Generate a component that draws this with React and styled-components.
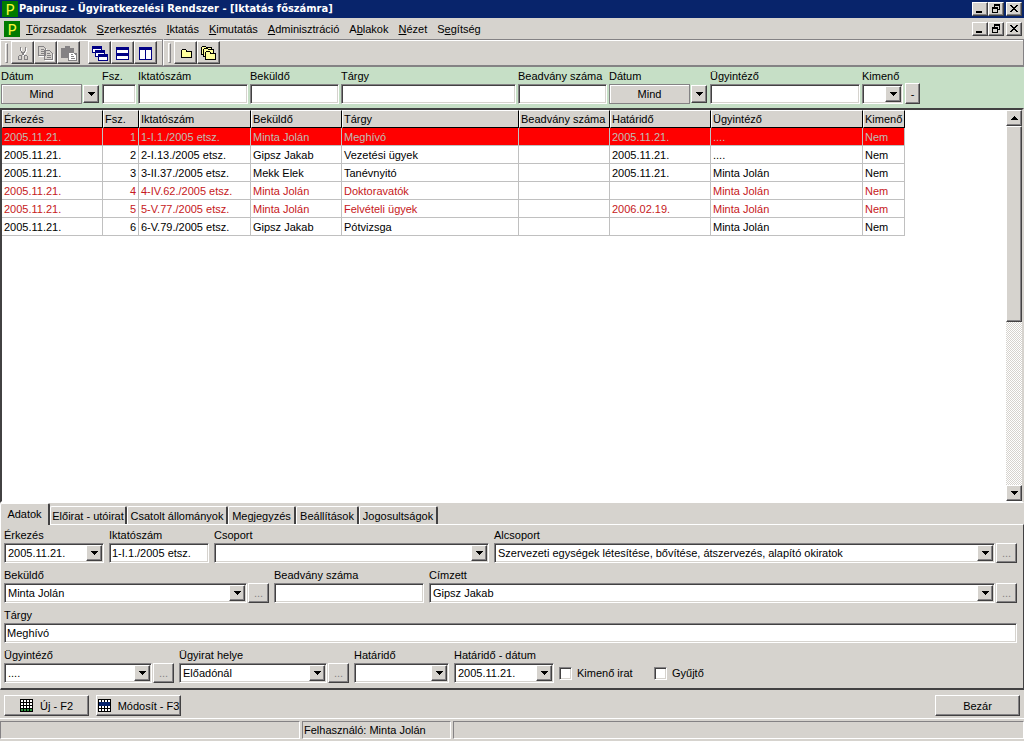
import React, { useState } from 'react';
import styled, { createGlobalStyle, css, ThemeProvider } from 'styled-components';

const theme = {
  face: '#d6d3ce',
  light: '#ffffff',
  shadow: '#848284',
  dark: '#424142',
  title: '#08246b',
  filter: '#c6dfc6',
  line: '#c0c0c0',
};

const menus = [
  ['', 'T', 'örzsadatok'],
  ['', 'S', 'zerkesztés'],
  ['', 'I', 'ktatás'],
  ['', 'K', 'imutatás'],
  ['', 'A', 'dminisztráció'],
  ['A', 'b', 'lakok'],
  ['', 'N', 'ézet'],
  ['S', 'e', 'gítség'],
];

const columns = [
  { title: 'Érkezés', width: 101 },
  { title: 'Fsz.', width: 36 },
  { title: 'Iktatószám', width: 112 },
  { title: 'Beküldő', width: 91 },
  { title: 'Tárgy', width: 177 },
  { title: 'Beadvány száma', width: 91 },
  { title: 'Határidő', width: 101 },
  { title: 'Ügyintéző', width: 152 },
  { title: 'Kimenő', width: 42 },
];

const rows = [
  { state: 'selected', cells: ['2005.11.21.', '1', '1-I.1./2005 etsz.', 'Minta Jolán', 'Meghívó', '', '2005.11.21.', '....', 'Nem'] },
  { state: '', cells: ['2005.11.21.', '2', '2-I.13./2005 etsz.', 'Gipsz Jakab', 'Vezetési ügyek', '', '2005.11.21.', '....', 'Nem'] },
  { state: '', cells: ['2005.11.21.', '3', '3-II.37./2005 etsz.', 'Mekk Elek', 'Tanévnyitó', '', '2005.11.21.', 'Minta Jolán', 'Nem'] },
  { state: 'late', cells: ['2005.11.21.', '4', '4-IV.62./2005 etsz.', 'Minta Jolán', 'Doktoravatók', '', '', 'Minta Jolán', 'Nem'] },
  { state: 'late', cells: ['2005.11.21.', '5', '5-V.77./2005 etsz.', 'Minta Jolán', 'Felvételi ügyek', '', '2006.02.19.', 'Minta Jolán', 'Nem'] },
  { state: '', cells: ['2005.11.21.', '6', '6-V.79./2005 etsz.', 'Gipsz Jakab', 'Pótvizsga', '', '', 'Minta Jolán', 'Nem'] },
];

const tabs = [
  { title: 'Adatok', width: 50 },
  { title: 'Előirat - utóirat', width: 77 },
  { title: 'Csatolt állományok', width: 101 },
  { title: 'Megjegyzés', width: 68 },
  { title: 'Beállítások', width: 63 },
  { title: 'Jogosultságok', width: 79 },
];

const App = () => {
  const [activeTab, setActiveTab] = useState('Adatok');

  return (
    <ThemeProvider theme={theme}>
      <GlobalStyle />
      <Window>
        <TitleBar>
          <Logo aria-hidden="true">P</Logo>
          <Title>Papirusz - Ügyiratkezelési Rendszer - [Iktatás főszámra]</Title>
          <WindowButtons />
        </TitleBar>

        <MenuBar>
          <Logo aria-hidden="true">P</Logo>
          <Menus>
            {menus.map(([before, key, after]) => (
              <MenuItem key={key + after} type="button">
                {before}
                <u>{key}</u>
                {after}
              </MenuItem>
            ))}
          </Menus>
          <WindowButtons />
        </MenuBar>

        <ToolBars>
          <ToolBar>
            <Grip />
            <ToolGroup>
              <ToolButton type="button" aria-label="Kivágás" disabled><CutIcon /></ToolButton>
              <ToolButton type="button" aria-label="Másolás" disabled><CopyIcon /></ToolButton>
              <ToolButton type="button" aria-label="Beillesztés" disabled><PasteIcon /></ToolButton>
            </ToolGroup>
            <ToolGroup>
              <ToolButton type="button" aria-label="Lépcsőzetes"><CascadeIcon /></ToolButton>
              <ToolButton type="button" aria-label="Vízszintes"><RowsIcon /></ToolButton>
              <ToolButton type="button" aria-label="Függőleges"><ColumnsIcon /></ToolButton>
            </ToolGroup>
          </ToolBar>
          <ToolBar $fill>
            <Grip />
            <ToolGroup>
              <ToolButton type="button" aria-label="Irat"><FolderIcon /></ToolButton>
              <ToolButton type="button" aria-label="Iratok"><FoldersIcon /></ToolButton>
            </ToolGroup>
          </ToolBar>
        </ToolBars>

        <FilterBar>
          <Field id="f-date" label="Dátum"><Combo id="f-date" value="Mind" flat /></Field>
          <Field id="f-no" label="Fsz."><TextBox id="f-no" /></Field>
          <Field id="f-reg" label="Iktatószám"><TextBox id="f-reg" /></Field>
          <Field id="f-sender" label="Beküldő"><TextBox id="f-sender" /></Field>
          <Field id="f-subject" label="Tárgy"><TextBox id="f-subject" /></Field>
          <Field id="f-sub" label="Beadvány száma"><TextBox id="f-sub" /></Field>
          <Field id="f-due" label="Dátum"><Combo id="f-due" value="Mind" flat /></Field>
          <Field id="f-clerk" label="Ügyintéző"><TextBox id="f-clerk" /></Field>
          <Field id="f-out" label="Kimenő"><Combo id="f-out" value="" /></Field>
          <ClearButton type="button">-</ClearButton>
        </FilterBar>

        <GridArea>
          <GridScroll>
            <Table>
              <colgroup>
                {columns.map(({ title, width }) => (
                  <Col key={title} $width={width} />
                ))}
              </colgroup>
              <thead>
                <tr>
                  {columns.map(({ title }) => (
                    <Th key={title}>{title}</Th>
                  ))}
                </tr>
              </thead>
              <tbody>
                {rows.map(({ state, cells }) => (
                  <Row key={cells[1]} $state={state}>
                    {cells.map((cell, i) => (
                      <Td key={columns[i].title} $right={i === 1}>{cell}</Td>
                    ))}
                  </Row>
                ))}
              </tbody>
            </Table>
          </GridScroll>
          <ScrollBar>
            <ScrollButton type="button" aria-label="Fel"><Arrow up /></ScrollButton>
            <Thumb />
            <Track />
            <ScrollButton type="button" aria-label="Le"><Arrow /></ScrollButton>
          </ScrollBar>
        </GridArea>

        <Tabs role="tablist">
          {tabs.map(({ title, width }) => (
            <Tab
              key={title}
              type="button"
              role="tab"
              aria-selected={activeTab === title}
              $active={activeTab === title}
              $width={width}
              onClick={() => setActiveTab(title)}
            >
              {title}
            </Tab>
          ))}
        </Tabs>

        <TabPage>
          <FormRow>
            <Field id="arrived" label="Érkezés" width={100}><Combo id="arrived" value="2005.11.21." /></Field>
            <Field id="regno" label="Iktatószám" width={100}><TextBox id="regno" defaultValue="1-I.1./2005 etsz." /></Field>
            <Field id="group" label="Csoport" width={275}><Combo id="group" value="" /></Field>
            <Field id="subgroup" label="Alcsoport">
              <Combo id="subgroup" value="Szervezeti egységek létesítése, bővítése, átszervezés, alapító okiratok" />
              <MoreButton type="button" disabled>...</MoreButton>
            </Field>
          </FormRow>
          <FormRow>
            <Field id="sender" label="Beküldő" width={265}>
              <Combo id="sender" value="Minta Jolán" />
              <MoreButton type="button" disabled>...</MoreButton>
            </Field>
            <Field id="subno" label="Beadvány száma" width={150}><TextBox id="subno" /></Field>
            <Field id="addressee" label="Címzett">
              <Combo id="addressee" value="Gipsz Jakab" />
              <MoreButton type="button" disabled>...</MoreButton>
            </Field>
          </FormRow>
          <FormRow>
            <Field id="subject" label="Tárgy"><TextBox id="subject" defaultValue="Meghívó" /></Field>
          </FormRow>
          <FormRow>
            <Field id="clerk" label="Ügyintéző" width={170}>
              <Combo id="clerk" value="...." />
              <MoreButton type="button" disabled>...</MoreButton>
            </Field>
            <Field id="place" label="Ügyirat helye" width={170}>
              <Combo id="place" value="Előadónál" />
              <MoreButton type="button" disabled>...</MoreButton>
            </Field>
            <Field id="due" label="Határidő" width={95}><Combo id="due" value="" /></Field>
            <Field id="duedate" label="Határidő - dátum" width={100}><Combo id="duedate" value="2005.11.21." /></Field>
            <CheckLabel><Check type="checkbox" />Kimenő irat</CheckLabel>
            <CheckLabel><Check type="checkbox" />Gyűjtő</CheckLabel>
          </FormRow>
        </TabPage>

        <Actions>
          <ActionButton type="button"><TableIcon color="#2f9440" /><span>Új - F2</span></ActionButton>
          <ActionButton type="button"><TableIcon color="#08246b" top /><span>Módosít - F3</span></ActionButton>
          <Spacer />
          <ActionButton type="button">Bezár</ActionButton>
        </Actions>

        <StatusBar>
          <StatusPane $width={300} />
          <StatusPane $width={149}>Felhasználó: Minta Jolán</StatusPane>
          <StatusPane />
        </StatusBar>
      </Window>
    </ThemeProvider>
  );
};

const WindowButtons = () => (
  <Controls>
    <ControlButton type="button" aria-label="Kis méret">
      <Icon width="10" height="10"><path d="M1 7h6v2H1z" /></Icon>
    </ControlButton>
    <ControlButton type="button" aria-label="Előző méret">
      <Icon width="10" height="10">
        <path d="M3 0h6v6H7V5h1V2H4v1H3zM1 3h6v6H1zM2 5v3h4V5z" fillRule="evenodd" />
      </Icon>
    </ControlButton>
    <ControlButton type="button" aria-label="Bezárás" $gap>
      <Icon width="10" height="10">
        <path d="M1 1h2v1h1v1h2V2h1V1h2v1H8v1H7v1H6v1h1v1h1v1h1v1H7V7H6V6H4v1H3v1H1V7h1V6h1V5h1V4H3V3H2V2H1z" />
      </Icon>
    </ControlButton>
  </Controls>
);

const Field = ({ id, label, width, children }) => (
  <FieldBox $width={width}>
    <Label htmlFor={id}>{label}</Label>
    <FieldControls>{children}</FieldControls>
  </FieldBox>
);

const Combo = ({ id, value, flat }) => (
  <ComboBox $flat={flat}>
    <Select id={id} defaultValue={value} $flat={flat}>
      <option>{value}</option>
    </Select>
    <DropArrow><Arrow /></DropArrow>
  </ComboBox>
);

const Arrow = ({ up }) => (
  <Icon width="7" height="4">
    <path d={up ? 'M3 0h1v1h1v1h1v1h1v1H0V3h1V2h1V1h1z' : 'M0 0h7v1H6v1H5v1H4v1H3V3H2V2H1V1H0z'} />
  </Icon>
);

const CutIcon = () => (
  <Icon width="16" height="16" fill="none" strokeWidth="1">
    <path d="M6.500 2.500v4l4 5M11.500 2.500v4l-4 5" stroke="#fff" />
    <path d="M5.500 1.500v4l4 5M10.500 1.500v4l-4 5M4.500 10.500h2v4h-3v-3zM9.500 10.500h2l1 1v3h-3z" stroke="#848284" />
  </Icon>
);

const CopyIcon = () => (
  <Icon width="16" height="16" fill="#d6d3ce">
    <path d="M1.500 2.500h5l2 2v7h-7zM7.500 6.500h5l3 3v6h-8z" stroke="#fff" />
    <path d="M.5 1.500h5l2 2v7h-7zM6.500 5.500h5l3 3v6h-8z" stroke="#848284" />
    <path d="M2.500 4.500h3M2.500 6.500h4M2.500 8.500h4M8.500 8.500h3M8.500 10.500h4M8.500 12.500h4" stroke="#848284" />
  </Icon>
);

const PasteIcon = () => (
  <Icon width="16" height="16">
    <path d="M0 3h4V1h5v2h4v5h3v7H7v-2H0z" fill="#848284" />
    <path d="M8 8h4l3 3v4H8z" fill="#fff" />
    <path d="M9.500 9.500h2M9.500 11.500h3M9.500 13.500h4" stroke="#848284" />
    <path d="M15.500 9v7M7 15.500h9" stroke="#848284" />
  </Icon>
);

const CascadeIcon = () => (
  <Icon width="16" height="16">
    <path d="M0 1h10v7H0z" fill="#000084" />
    <path d="M1 4h8v3H1z" fill="#fff" />
    <path d="M3 5h10v7H3z" fill="#000084" />
    <path d="M4 8h8v3H4z" fill="#fff" />
    <path d="M6 9h10v7H6z" fill="#000084" />
    <path d="M7 12h8v3H7z" fill="#fff" />
  </Icon>
);

const RowsIcon = () => (
  <Icon width="16" height="16">
    <path d="M1 2h13v13H1z" fill="#000084" />
    <path d="M2 5h11v3H2zM2 11h11v3H2z" fill="#fff" />
  </Icon>
);

const ColumnsIcon = () => (
  <Icon width="16" height="16">
    <path d="M1 2h13v13H1z" fill="#000084" />
    <path d="M2 5h5v9H2zM8 5h5v9H8z" fill="#fff" />
  </Icon>
);

const FolderIcon = () => (
  <Icon width="16" height="16">
    <path d="M3.500 12.500v-7l1-1h3l1 1v1h5v6z" fill="#ffff9c" stroke="#000" />
  </Icon>
);

const FoldersIcon = () => (
  <Icon width="16" height="16" fill="#ffff9c" stroke="#000">
    <path d="M.5 9.500v-7l1-1h3l1 1h5v7z" />
    <path d="M2.500 11.500v-7l1-1h3l1 1h5v7z" />
    <path d="M4.500 14.500v-7l1-1h3l1 1v1h5v6z" />
  </Icon>
);

const TableIcon = ({ color, top }) => (
  <Icon width="13" height="13">
    <path d="M0 0h13v13H0z" fill="#000" />
    <path d="M1 1h2v2H1zM4 1h2v2H4zM7 1h2v2H7zM10 1h2v2h-2zM1 4h2v2H1zM4 4h2v2H4zM7 4h2v2H7zM10 4h2v2h-2zM1 7h2v2H1zM4 7h2v2H4zM7 7h2v2H7zM10 7h2v2h-2zM1 10h2v2H1zM4 10h2v2H4zM7 10h2v2H7zM10 10h2v2h-2z" fill="#fff" />
    <path d={top ? 'M1 3h11v4H1z' : 'M1 10h2v2H1zM4 10h2v2H4zM7 10h2v2H7zM10 10h2v2h-2z'} fill={color} />
  </Icon>
);

const raised = css`
  background: ${({ theme }) => theme.face};
  border: 1px solid;
  border-color: ${({ theme }) => `${theme.light} ${theme.dark} ${theme.dark} ${theme.light}`};
  box-shadow: inset -1px -1px 0 ${({ theme }) => theme.shadow};
`;

const sunken = css`
  background: #fff;
  border: 1px solid;
  border-color: ${({ theme }) => `${theme.shadow} ${theme.light} ${theme.light} ${theme.shadow}`};
  box-shadow:
    inset 1px 1px 0 ${({ theme }) => theme.dark},
    inset -1px -1px 0 ${({ theme }) => theme.face};
`;

const GlobalStyle = createGlobalStyle`
  * {
    box-sizing: border-box;
  }

  body {
    margin: 0;
  }

  body, button, input, select {
    font-family: 'Liberation Sans', Arial, sans-serif;
    font-size: 11px;
    line-height: 14px;
    color: #000;
  }

  button {
    padding: 0;
  }
`;

const Icon = styled.svg.attrs({ shapeRendering: 'crispEdges', 'aria-hidden': true })`
  display: block;
  flex: none;
`;

const Window = styled.div`
  display: flex;
  flex-direction: column;
  min-height: 100vh;
  background: ${({ theme }) => theme.face};
`;

const TitleBar = styled.header`
  display: flex;
  align-items: center;
  height: 18px;
  padding: 0 2px;
  background: ${({ theme }) => theme.title};
`;

const Logo = styled.span`
  flex: none;
  width: 16px;
  height: 16px;
  background: #007a00;
  color: #f7f739;
  font-family: Lato, sans-serif;
  font-size: 15px;
  line-height: 16px;
  text-align: center;
`;

const Title = styled.h1`
  flex: 1;
  margin: 0 0 0 1px;
  color: #fff;
  font-family: 'DejaVu Sans Condensed', 'DejaVu Sans', sans-serif;
  font-size: 11px;
  font-weight: bold;
  white-space: nowrap;
`;

const Controls = styled.div`
  display: flex;
`;

const ControlButton = styled.button`
  ${raised}
  display: flex;
  align-items: center;
  justify-content: center;
  width: 16px;
  height: 14px;
  margin-left: ${({ $gap }) => ($gap ? '2px' : '0')};
`;

const MenuBar = styled.nav`
  display: flex;
  align-items: center;
  height: 21px;
  padding: 0 2px 0 4px;
`;

const Menus = styled.div`
  display: flex;
  flex: 1;
  gap: 10px;
  padding-left: 6px;
`;

const MenuItem = styled.button`
  border: 0;
  background: none;
`;

const ToolBars = styled.div`
  display: flex;
  height: 28px;
  border-bottom: 1px solid ${({ theme }) => theme.shadow};
`;

const ToolBar = styled.div`
  display: flex;
  align-items: center;
  gap: 3px;
  flex: ${({ $fill }) => ($fill ? '1' : 'none')};
  padding: 0 5px 0 4px;
  border: 1px solid;
  border-color: ${({ theme }) => `${theme.shadow} ${theme.shadow} ${theme.shadow} ${theme.light}`};
  box-shadow: inset 0 1px 0 ${({ theme }) => theme.light};
`;

const Grip = styled.span`
  width: 3px;
  height: 20px;
  border: 1px solid;
  border-color: ${({ theme }) => `${theme.light} ${theme.shadow} ${theme.shadow} ${theme.light}`};
`;

const ToolGroup = styled.div`
  display: flex;

  & + & {
    margin-left: 5px;
  }
`;

const ToolButton = styled.button`
  ${raised}
  display: flex;
  align-items: center;
  justify-content: center;
  width: 23px;
  height: 23px;
`;

const FilterBar = styled.form`
  display: grid;
  grid-template-columns: 99px 34px 110px 89px 175px 89px 99px 150px 41px 15px;
  column-gap: 2px;
  align-items: end;
  padding: 1px 1px 4px;
  background: ${({ theme }) => theme.filter};
`;

const FieldBox = styled.div`
  display: flex;
  flex-direction: column;
  flex: ${({ $width }) => ($width ? `0 0 ${$width}px` : '1')};
  min-width: 0;
`;

const Label = styled.label`
  line-height: 16px;
  white-space: nowrap;
`;

const FieldControls = styled.div`
  display: flex;
  gap: 1px;
`;

const TextBox = styled.input.attrs({ type: 'text' })`
  ${sunken}
  flex: 1;
  min-width: 0;
  height: 20px;
  padding: 0 2px;
  outline: 0;
`;

const ComboBox = styled.div`
  position: relative;
  display: flex;
  flex: 1;
  min-width: 0;
  height: 20px;
  ${({ $flat }) => !$flat && sunken}
`;

const Select = styled.select`
  appearance: none;
  flex: 1;
  min-width: 0;
  padding: 0 18px 0 3px;
  border: 0;
  background: transparent;
  outline: 0;

  ${({ $flat, theme }) =>
    $flat &&
    css`
      margin-right: 18px;
      padding: 0;
      border: 1px solid ${theme.shadow};
      border-radius: 0;
      background: ${theme.face};
      box-shadow: inset 1px 1px 0 ${theme.light};
      text-align: center;
      text-align-last: center;
    `}
`;

const DropArrow = styled.span`
  ${raised}
  position: absolute;
  top: 1px;
  right: 1px;
  bottom: 1px;
  display: flex;
  align-items: center;
  justify-content: center;
  width: 16px;
  pointer-events: none;
`;

const ClearButton = styled.button`
  ${raised}
  height: 21px;
`;

const GridArea = styled.main`
  display: flex;
  flex: 1;
  border: 2px solid;
  border-color: ${({ theme }) => `${theme.dark} ${theme.face} ${theme.light} ${theme.dark}`};
  background: #fff;
`;

const GridScroll = styled.div`
  flex: 1;
  min-width: 0;
  overflow: hidden;
`;

const Table = styled.table`
  width: 903px;
  table-layout: fixed;
  border-collapse: separate;
  border-spacing: 0;
`;

const Col = styled.col`
  width: ${({ $width }) => $width}px;
`;

const Th = styled.th`
  height: 18px;
  padding: 0 1px;
  background: ${({ theme }) => theme.face};
  border: 1px solid;
  border-color: ${({ theme }) => theme.light} #000 #000 ${({ theme }) => theme.light};
  font-weight: normal;
  text-align: left;
  white-space: nowrap;
`;

const Td = styled.td`
  height: 18px;
  padding: 0 2px;
  border: solid ${({ theme }) => theme.line};
  border-width: 0 1px 1px 0;
  text-align: ${({ $right }) => ($right ? 'right' : 'left')};
  white-space: nowrap;
`;

const rowColors = {
  selected: css`
    background: #f00;
    color: #bdbeb5;
  `,
  late: css`
    color: #c61821;
  `,
};

const Row = styled.tr`
  ${({ $state }) => rowColors[$state]}
`;

const ScrollBar = styled.div`
  display: flex;
  flex-direction: column;
  width: 16px;
`;

const ScrollButton = styled.button`
  ${raised}
  display: flex;
  align-items: center;
  justify-content: center;
  height: 16px;
`;

const Thumb = styled.div`
  ${raised}
  flex: 0 0 50%;
`;

const Track = styled.div`
  flex: 1;
  background: repeating-conic-gradient(#fff 0 25%, ${({ theme }) => theme.face} 0 50%) 0 0 / 2px 2px;
`;

const Tabs = styled.div`
  display: flex;
  align-items: flex-end;
  height: 21px;
`;

const Tab = styled.button`
  width: ${({ $width }) => $width}px;
  height: ${({ $active }) => ($active ? '22px' : '18px')};
  margin-bottom: ${({ $active }) => ($active ? '-1px' : '0')};
  padding-bottom: ${({ $active }) => ($active ? '2px' : '0')};
  border: solid;
  border-width: 1px 2px 0 1px;
  border-color: ${({ theme }) => `${theme.light} ${theme.dark} ${theme.light} ${theme.light}`};
  border-radius: 2px 2px 0 0;
  background: ${({ theme }) => theme.face};
  white-space: nowrap;
  z-index: 1;
`;

const TabPage = styled.section`
  display: flex;
  flex-direction: column;
  gap: 4px;
  padding: 2px 6px 5px 3px;
  border: solid;
  border-width: 1px 1px 2px 1px;
  border-color: ${({ theme }) => `${theme.light} ${theme.dark} ${theme.dark} ${theme.light}`};
`;

const FormRow = styled.div`
  display: flex;
  align-items: flex-end;
  gap: 5px;
`;

const MoreButton = styled.button`
  ${raised}
  width: 21px;
  height: 20px;
  color: ${({ theme }) => theme.shadow};
`;

const CheckLabel = styled.label`
  display: flex;
  align-items: center;
  gap: 5px;
  width: 90px;
  height: 20px;
`;

const Check = styled.input`
  ${sunken}
  appearance: none;
  width: 13px;
  height: 13px;
  margin: 0;
`;

const Actions = styled.footer`
  display: flex;
  gap: 7px;
  padding: 5px 4px 2px;
  border-bottom: 1px solid ${({ theme }) => theme.light};
`;

const ActionButton = styled.button`
  ${raised}
  display: flex;
  align-items: center;
  justify-content: center;
  gap: 7px;
  width: 85px;
  height: 21px;
  white-space: nowrap;
`;

const Spacer = styled.span`
  flex: 1;
`;

const StatusBar = styled.div`
  display: flex;
  gap: 2px;
  padding: 2px 0;
  border-bottom: 1px solid ${({ theme }) => theme.light};
`;

const StatusPane = styled.div`
  flex: ${({ $width }) => ($width ? `0 0 ${$width}px` : '1')};
  height: 18px;
  padding: 1px;
  border: 1px solid;
  border-color: ${({ theme }) => `${theme.shadow} ${theme.light} ${theme.light} ${theme.shadow}`};
  white-space: nowrap;
`;

export default App;
